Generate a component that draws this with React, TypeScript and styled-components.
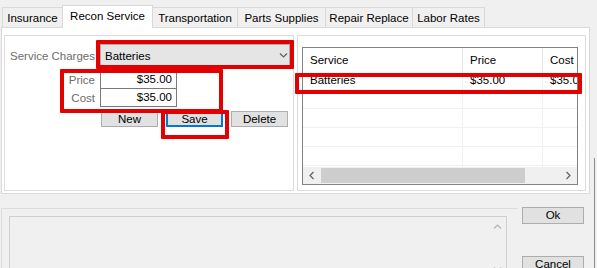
import React from 'react';
import styled, { createGlobalStyle } from 'styled-components';

const GlobalStyle = createGlobalStyle`
  html, body {
    margin: 0;
    padding: 0;
    background: #f0f0f0;
  }
  body {
    font-family: "Segoe UI", "Liberation Sans", Arial, sans-serif;
    font-size: 11.5px;
    color: #000;
  }
`;

const TABS = [
  { label: 'Insurance', width: 61 },
  { label: 'Recon Service', width: 91 },
  { label: 'Transportation', width: 86 },
  { label: 'Parts Supplies', width: 89 },
  { label: 'Repair Replace', width: 88 },
  { label: 'Labor Rates', width: 73 },
];

const ROWS = [{ service: 'Batteries', price: '$35.00', cost: '$35.00' }];

const Chevron: React.FC<{ dir: 'down' | 'up' | 'left' | 'right'; color?: string }> = ({ dir, color = '#606060' }) => {
  const rot = { down: 0, up: 180, left: 90, right: -90 }[dir];
  return (
    <svg width="9" height="9" viewBox="0 0 9 9" style={{ transform: `rotate(${rot}deg)` }}>
      <path d="M1 2.5 L4.5 6 L8 2.5" fill="none" stroke={color} strokeWidth="1.2" />
    </svg>
  );
};

const App: React.FC = () => (
  <>
    <GlobalStyle />
    <Window>
      <TabStrip>
        {TABS.map((t) => (
          <Tab key={t.label} $w={t.width} $active={t.label === 'Recon Service'}>
            {t.label}
          </Tab>
        ))}
      </TabStrip>

      <TabPanel>
        <LeftGroup>
          <Form>
            <FieldLabel>Service Charges</FieldLabel>
            <Combo>
              <span>Batteries</span>
              <Chevron dir="down" />
            </Combo>

            <FieldLabel $top={3}>Price</FieldLabel>
            <MoneyInput $top={3}>$35.00</MoneyInput>

            <FieldLabel $top={-1}>Cost</FieldLabel>
            <MoneyInput $top={-1}>$35.00</MoneyInput>

            <span />
            <ButtonRow>
              <SmallButton>New</SmallButton>
              <SmallButton $focused>Save</SmallButton>
              <SmallButton>Delete</SmallButton>
            </ButtonRow>
          </Form>
        </LeftGroup>

        <RightGroup>
          <ListView>
            <HeaderRow>
              <HeaderCell>Service</HeaderCell>
              <HeaderCell>Price</HeaderCell>
              <HeaderCell>Cost</HeaderCell>
            </HeaderRow>
            <ListBody>
              {ROWS.map((r) => (
                <BodyRow key={r.service}>
                  <BodyCell>{r.service}</BodyCell>
                  <BodyCell>{r.price}</BodyCell>
                  <BodyCell>{r.cost}</BodyCell>
                </BodyRow>
              ))}
              {[0, 1, 2, 3, 4].map((i) => (
                <BodyRow key={i}>
                  <BodyCell />
                  <BodyCell />
                  <BodyCell />
                </BodyRow>
              ))}
            </ListBody>
            <HScroll>
              <ScrollArrow>
                <Chevron dir="left" />
              </ScrollArrow>
              <ScrollTrack>
                <ScrollThumb />
              </ScrollTrack>
              <ScrollArrow>
                <Chevron dir="right" />
              </ScrollArrow>
            </HScroll>
          </ListView>
        </RightGroup>
      </TabPanel>

      <BottomRow>
        <NotesGroup>
          <NotesBox>
            <span />
            <VScroll>
              <Chevron dir="up" color="#b4b4b4" />
              <Chevron dir="down" color="#b4b4b4" />
            </VScroll>
          </NotesBox>
        </NotesGroup>
        <DialogButtons>
          <DialogButton>Ok</DialogButton>
          <DialogButton>Cancel</DialogButton>
        </DialogButtons>
      </BottomRow>

      <WindowEdge />

      <RedBox $x={96} $y={40} $w={198} $h={29} />
      <RedBox $x={60} $y={69} $w={163} $h={44} />
      <RedBox $x={161} $y={110} $w={68} $h={29} />
      <RedBox $x={295} $y={73} $w={287} $h={21} />
    </Window>
  </>
);

const Window = styled.div`
  position: relative;
  width: 597px;
  height: 268px;
  overflow: hidden;
  background: #f0f0f0;
  padding-left: 1px;
  box-sizing: border-box;
`;

const TabStrip = styled.div`
  display: flex;
  align-items: flex-end;
  height: 27px;
  padding-left: 1px;
`;

const Tab = styled.div<{ $active?: boolean; $w: number }>`
  position: relative;
  z-index: ${({ $active }) => ($active ? 2 : 1)};
  display: flex;
  align-items: center;
  justify-content: center;
  box-sizing: border-box;
  width: ${({ $w }) => $w}px;
  height: ${({ $active }) => ($active ? '23px' : '20px')};
  margin-bottom: ${({ $active }) => ($active ? '-1px' : '0')};
  margin-left: -1px;
  padding-bottom: ${({ $active }) => ($active ? '3px' : '0')};
  background: ${({ $active }) => ($active ? '#fff' : '#f0f0f0')};
  border: 1px solid #d9d9d9;
  border-bottom: none;
  white-space: nowrap;

  &:first-child {
    margin-left: 0;
  }
`;

const TabPanel = styled.div`
  display: flex;
  gap: 3px;
  box-sizing: border-box;
  width: 589px;
  height: 167px;
  padding: 7px 2px 2px;
  background: #fff;
  border: 1px solid #d9d9d9;
`;

const GroupBox = styled.div`
  box-sizing: border-box;
  height: 100%;
  border: 1px solid #dcdcdc;
`;

const LeftGroup = styled(GroupBox)`
  width: 290px;
  padding: 8px 3px 0 0;
`;

const RightGroup = styled(GroupBox)`
  width: 289px;
  padding: 11px 7px 0 4px;
`;

const Form = styled.div`
  display: grid;
  grid-template-columns: 90px 190px;
  column-gap: 5px;
  align-items: center;
`;

const FieldLabel = styled.div<{ $top?: number }>`
  margin-top: ${({ $top = 0 }) => $top}px;
  text-align: right;
  color: #6d6d6d;
  white-space: nowrap;
`;

const Combo = styled.div`
  display: flex;
  align-items: center;
  justify-content: space-between;
  box-sizing: border-box;
  height: 23px;
  padding: 0 1px 0 4px;
  background: #e5e5e5;
  border: 1px solid #acacac;
`;

const MoneyInput = styled.div<{ $top?: number }>`
  box-sizing: border-box;
  width: 77px;
  height: 19px;
  margin-top: ${({ $top = 0 }) => $top}px;
  padding-right: 4px;
  line-height: 17px;
  text-align: right;
  background: #fff;
  border: 1px solid #7a7a7a;
`;

const ButtonRow = styled.div`
  display: flex;
  gap: 8px;
  margin-top: 4px;
  padding-left: 1px;
`;

const SmallButton = styled.div<{ $focused?: boolean }>`
  box-sizing: border-box;
  width: 57px;
  height: 16px;
  line-height: ${({ $focused }) => ($focused ? '12px' : '14px')};
  text-align: center;
  background: #e1e1e1;
  border: ${({ $focused }) => ($focused ? '2px solid #0078d7' : '1px solid #adadad')};
`;

const ListView = styled.div`
  display: flex;
  flex-direction: column;
  box-sizing: border-box;
  width: 276px;
  height: 138px;
  overflow: hidden;
  border: 1px solid #828282;
`;

const columns = '160px 80px 80px';

const HeaderRow = styled.div`
  display: grid;
  grid-template-columns: ${columns};
  flex: 0 0 23px;
`;

const HeaderCell = styled.div`
  display: flex;
  align-items: center;
  padding-left: 7px;
  border-right: 1px solid #e5e5e5;
  white-space: nowrap;
`;

const ListBody = styled.div`
  flex: 1;
  overflow: hidden;
`;

const BodyRow = styled.div`
  display: grid;
  grid-template-columns: ${columns};
  height: 19px;
  border-bottom: 1px solid #f0f0f0;
  box-sizing: border-box;
`;

const BodyCell = styled.div`
  display: flex;
  align-items: center;
  padding-left: 7px;
  border-right: 1px solid #f0f0f0;
  white-space: nowrap;
  overflow: hidden;
`;

const HScroll = styled.div`
  display: flex;
  flex: 0 0 17px;
  background: #f0f0f0;
`;

const ScrollArrow = styled.div`
  display: flex;
  align-items: center;
  justify-content: center;
  width: 17px;
`;

const ScrollTrack = styled.div`
  flex: 1;
  display: flex;
  align-items: center;
  padding: 0 1px;
`;

const ScrollThumb = styled.div`
  width: 204px;
  height: 15px;
  background: #cdcdcd;
`;

const BottomRow = styled.div`
  display: flex;
  align-items: flex-start;
`;

const NotesGroup = styled.div`
  box-sizing: border-box;
  width: 517px;
  height: 80px;
  margin-top: 14px;
  padding: 7px 11px 0 7px;
  border-top: 1px solid #dcdcdc;
  border-left: 1px solid #dcdcdc;
`;

const NotesBox = styled.div`
  display: flex;
  justify-content: space-between;
  box-sizing: border-box;
  height: 80px;
  background: #f0f0f0;
  border: 1px solid #d0d0d0;
`;

const VScroll = styled.div`
  display: flex;
  flex-direction: column;
  justify-content: space-between;
  align-items: center;
  width: 17px;
  height: 52px;
  padding: 5px 0 0;
`;

const DialogButtons = styled.div`
  display: flex;
  flex-direction: column;
  gap: 32px;
  margin: 13px 0 0 4px;
`;

const DialogButton = styled.div`
  box-sizing: border-box;
  width: 62px;
  height: 17px;
  line-height: 15px;
  text-align: center;
  background: #e1e1e1;
  border: 1px solid #adadad;
`;

const WindowEdge = styled.div`
  position: absolute;
  left: 594px;
  top: 158px;
  width: 1px;
  height: 110px;
  background: #8c8c8c;
`;

const RedBox = styled.div<{ $x: number; $y: number; $w: number; $h: number }>`
  position: absolute;
  left: ${({ $x }) => $x}px;
  top: ${({ $y }) => $y}px;
  width: ${({ $w }) => $w}px;
  height: ${({ $h }) => $h}px;
  box-sizing: border-box;
  border: 4px solid #e30000;
  border-radius: 1px;
  z-index: 5;
`;

export default App;
